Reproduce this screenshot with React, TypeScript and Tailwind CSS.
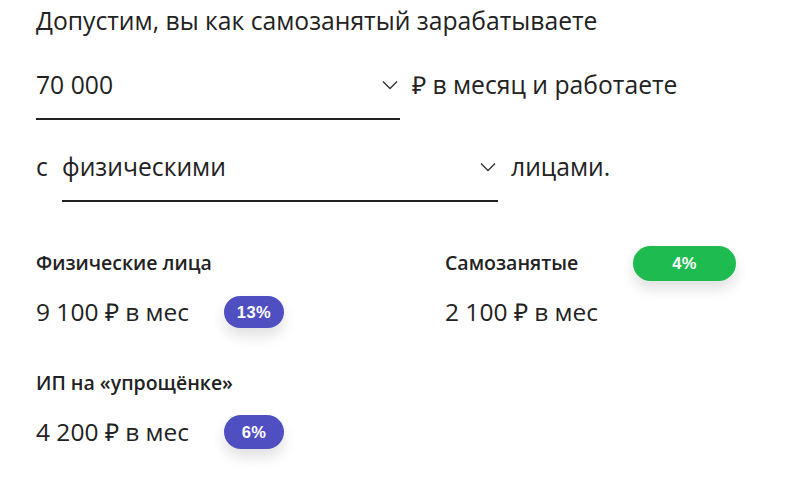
function Chevron() {
  return (
    <svg width="16" height="10" viewBox="0 0 16 10" fill="none" className="text-[#333]">
      <polyline points="1,1.5 8,8.5 15,1.5" stroke="currentColor" strokeWidth="1.4" />
    </svg>
  );
}

function Select({ value, width }: { value: string; width: string }) {
  return (
    <div className={`flex items-center justify-between border-b-2 border-[#222] h-[62px] pb-[6px] pr-[2px] ${width}`}>
      <span>{value}</span>
      <Chevron />
    </div>
  );
}

function Badge({ text, color, width, height }: { text: string; color: string; width: string; height: string }) {
  return (
    <span
      className={`inline-flex items-center justify-center rounded-full text-white text-[16.5px] font-bold tracking-wide shadow-[0_8px_14px_rgba(0,0,0,0.12)] ${color} ${width} ${height}`}
      style={{ fontFamily: '"Liberation Sans", Arial, sans-serif' }}
    >
      {text}
    </span>
  );
}

function Tax({ title, amount, badge }: { title: string; amount: string; badge?: React.ReactNode }) {
  return (
    <div className="flex flex-col">
      <div className="text-[19.5px] font-semibold h-[30px] leading-[30px]">{title}</div>
      <div className="flex items-center mt-[17px] h-[34px]">
        <span className="text-[24.5px] w-[188px]">{amount}</span>
        {badge}
      </div>
    </div>
  );
}

export default function App() {
  return (
    <div
      className="w-[800px] h-[495px] bg-white text-[#222] px-[36px] overflow-hidden"
      style={{ fontFamily: '"Open Sans", sans-serif' }}
    >
      <div className="text-[24.7px] leading-[32px] pt-[5px]">Допустим, вы как самозанятый зарабатываете</div>
      <div className="flex items-start text-[24.7px] mt-[21px]">
        <Select value="70 000" width="w-[364px]" />
        <span className="ml-[12px] h-[54px] flex items-center">₽ в месяц и работаете</span>
      </div>
      <div className="flex items-start text-[24.7px] mt-[20px]">
        <span className="w-[26px] h-[54px] flex items-center">с</span>
        <Select value="физическими" width="w-[436px]" />
        <span className="ml-[13px] h-[54px] flex items-center">лицами.</span>
      </div>
      <div className="grid grid-cols-[409px_1fr] mt-[46px] gap-y-[39px]">
        <Tax
          title="Физические лица"
          amount="9 100 ₽ в мес"
          badge={<Badge text="13%" color="bg-[#4f4fc1]" width="w-[60px]" height="h-[32px]" />}
        />
        <div className="flex flex-col">
          <div className="flex items-center h-[30px]">
            <span className="text-[19.5px] font-semibold w-[188px]">Самозанятые</span>
            <Badge text="4%" color="bg-[#1dbb50]" width="w-[103px]" height="h-[35px]" />
          </div>
          <div className="flex items-center mt-[17px] h-[34px]">
            <span className="text-[24.5px]">2 100 ₽ в мес</span>
          </div>
        </div>
        <Tax
          title="ИП на «упрощёнке»"
          amount="4 200 ₽ в мес"
          badge={<Badge text="6%" color="bg-[#4f4fc1]" width="w-[60px]" height="h-[34px]" />}
        />
      </div>
    </div>
  );
}
